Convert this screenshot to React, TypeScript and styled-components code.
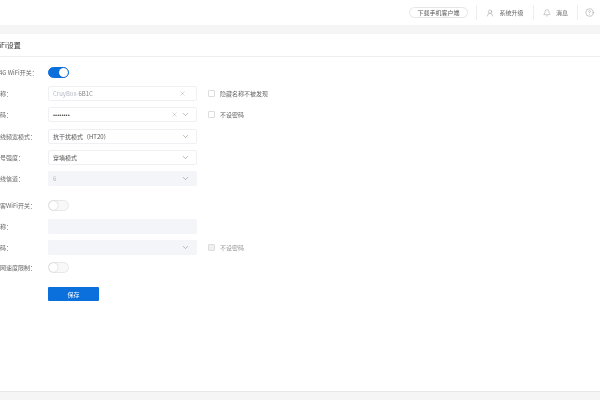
import styled, { createGlobalStyle } from "styled-components";
import { ChevronDown, X, Bell, CircleHelp, UserRound } from "lucide-react";

const GlobalStyle = createGlobalStyle`
  html, body {
    margin: 0;
    padding: 0;
    background: #fff;
  }
  * {
    box-sizing: border-box;
  }
`;

const Page = styled.div`
  width: 600px;
  height: 400px;
  overflow: hidden;
  display: flex;
  flex-direction: column;
  background: #f5f5f5;
  font-family: "Noto Sans CJK SC", "Liberation Sans", sans-serif;
  font-size: 6px;
  color: #555;
  filter: blur(0.55px);
`;

const Header = styled.header`
  height: 25px;
  flex: none;
  background: #fff;
  display: flex;
  align-items: center;
  justify-content: flex-end;
`;

const Pill = styled.div`
  width: 59px;
  height: 11px;
  margin-right: 8px;
  border: 1px solid #e6e6e6;
  border-radius: 6px;
  display: flex;
  align-items: center;
  justify-content: center;
  font-size: 6px;
  color: #555;
`;

const HeaderItem = styled.div<{ $width: number }>`
  width: ${(p) => p.$width}px;
  height: 15px;
  border-left: 1px solid #eee;
  display: flex;
  align-items: center;
  justify-content: center;
  gap: 5px;
  font-size: 6px;
  color: #666;
`;

const Card = styled.main`
  flex: 1;
  margin-top: 9px;
  background: #fff;
  border-bottom: 1px solid #e8e8e8;
`;

const TitleBar = styled.div`
  height: 23px;
  margin-left: -7px;
  border-bottom: 1px solid #eee;
  display: flex;
  align-items: center;
  white-space: nowrap;
  font-size: 7px;
  color: #333;
`;

const Form = styled.div`
  margin-left: -6px;
  padding-top: 5px;
  display: flex;
  flex-direction: column;
`;

const Row = styled.div<{ $height?: number; $gapTop?: number }>`
  height: ${(p) => p.$height ?? 21.2}px;
  margin-top: ${(p) => p.$gapTop ?? 0}px;
  display: flex;
  align-items: center;
`;

const Label = styled.div`
  width: 54px;
  flex: none;
  white-space: nowrap;
  color: #666;
`;

const Field = styled.div<{ $disabled?: boolean }>`
  width: 149px;
  height: 15px;
  flex: none;
  padding: 0 6px 0 4px;
  border: 1px solid ${(p) => (p.$disabled ? "#f4f5f9" : "#eff0f4")};
  border-radius: 2px;
  background: ${(p) => (p.$disabled ? "#f4f5f9" : "#fff")};
  display: flex;
  align-items: center;
  gap: 3px;
  color: #555;
`;

const Value = styled.span<{ $muted?: boolean }>`
  flex: 1;
  white-space: nowrap;
  color: ${(p) => (p.$muted ? "#b4b8c4" : "#555")};
`;

const Strong = styled.span`
  color: #888;
`;

const Dots = styled.span`
  flex: 1;
  font-family: "Liberation Sans", sans-serif;
  font-size: 6px;
  color: #555;
  white-space: nowrap;
`;

const Toggle = styled.div<{ $on?: boolean }>`
  width: 21px;
  height: 11px;
  border-radius: 6px;
  background: ${(p) => (p.$on ? "#0b6fdc" : "#f8f8f8")};
  border: 1px solid ${(p) => (p.$on ? "#0b6fdc" : "#e8e8e8")};
  display: flex;
  justify-content: ${(p) => (p.$on ? "flex-end" : "flex-start")};
`;

const Knob = styled.div`
  width: 9px;
  height: 9px;
  border-radius: 50%;
  background: #fff;
  box-shadow: 0 0 1px rgba(0, 0, 0, 0.35);
`;

const CheckWrap = styled.label<{ $disabled?: boolean }>`
  margin-left: 11px;
  display: flex;
  align-items: center;
  gap: 5px;
  font-size: 6px;
  color: ${(p) => (p.$disabled ? "#999" : "#666")};
`;

const CheckBox = styled.span<{ $disabled?: boolean }>`
  width: 7px;
  height: 7px;
  border: 1px solid #ddd;
  border-radius: 1px;
  background: ${(p) => (p.$disabled ? "#f0f0f0" : "#fff")};
`;

const SaveButton = styled.button`
  width: 51px;
  height: 14px;
  margin-left: 54px;
  border: none;
  border-radius: 1px;
  background: #0b6fdc;
  color: #fff;
  font-family: inherit;
  font-size: 6px;
  padding: 0;
`;

const Spacer = styled.span`
  width: 1px;
`;

const Footer = styled.div`
  height: 8px;
  flex: none;
`;

const Chevron = () => <ChevronDown size={9} color="#888" strokeWidth={1.5} />;
const Clear = () => <X size={7} color="#999" strokeWidth={1.2} />;

export default function App() {
  return (
    <>
      <GlobalStyle />
      <Page>
        <Header>
          <Pill>下载手机客户端</Pill>
          <HeaderItem $width={57}>
            <UserRound size={8} color="#888" strokeWidth={1.3} />
            <span>系统升级</span>
          </HeaderItem>
          <HeaderItem $width={44}>
            <Bell size={8} color="#888" strokeWidth={1.3} />
            <span>消息</span>
          </HeaderItem>
          <HeaderItem $width={23}>
            <CircleHelp size={9} color="#888" strokeWidth={1.2} />
          </HeaderItem>
        </Header>
        <Card>
          <TitleBar>WiFi设置</TitleBar>
          <Form>
            <Row>
              <Label>2.4G WiFi开关：</Label>
              <Toggle $on>
                <Knob />
              </Toggle>
            </Row>
            <Row>
              <Label>名称：</Label>
              <Field>
                <Value $muted>
                  CruyBox-<Strong>6B1C</Strong>
                </Value>
                <Clear />
                <Spacer />
              </Field>
              <CheckWrap>
                <CheckBox />
                隐藏名称不被发现
              </CheckWrap>
            </Row>
            <Row>
              <Label>密码：</Label>
              <Field>
                <Dots>••••••••</Dots>
                <Clear />
                <Chevron />
              </Field>
              <CheckWrap>
                <CheckBox />
                不设密码
              </CheckWrap>
            </Row>
            <Row>
              <Label>无线频宽模式：</Label>
              <Field>
                <Value>抗干扰模式（HT20）</Value>
                <Chevron />
              </Field>
            </Row>
            <Row>
              <Label>信号强度：</Label>
              <Field>
                <Value>穿墙模式</Value>
                <Chevron />
              </Field>
            </Row>
            <Row>
              <Label>无线信道：</Label>
              <Field $disabled>
                <Value $muted>6</Value>
                <Chevron />
              </Field>
            </Row>
            <Row $gapTop={6} $height={21}>
              <Label>访客WiFi开关：</Label>
              <Toggle>
                <Knob />
              </Toggle>
            </Row>
            <Row $height={20.7}>
              <Label>名称：</Label>
              <Field $disabled />
            </Row>
            <Row $height={20.7}>
              <Label>密码：</Label>
              <Field $disabled>
                <Value />
                <Chevron />
              </Field>
              <CheckWrap $disabled>
                <CheckBox $disabled />
                不设密码
              </CheckWrap>
            </Row>
            <Row $height={20.7}>
              <Label>上网速度限制：</Label>
              <Toggle>
                <Knob />
              </Toggle>
            </Row>
            <Row $gapTop={3} $height={26}>
              <SaveButton>保存</SaveButton>
            </Row>
          </Form>
        </Card>
        <Footer />
      </Page>
    </>
  );
}
